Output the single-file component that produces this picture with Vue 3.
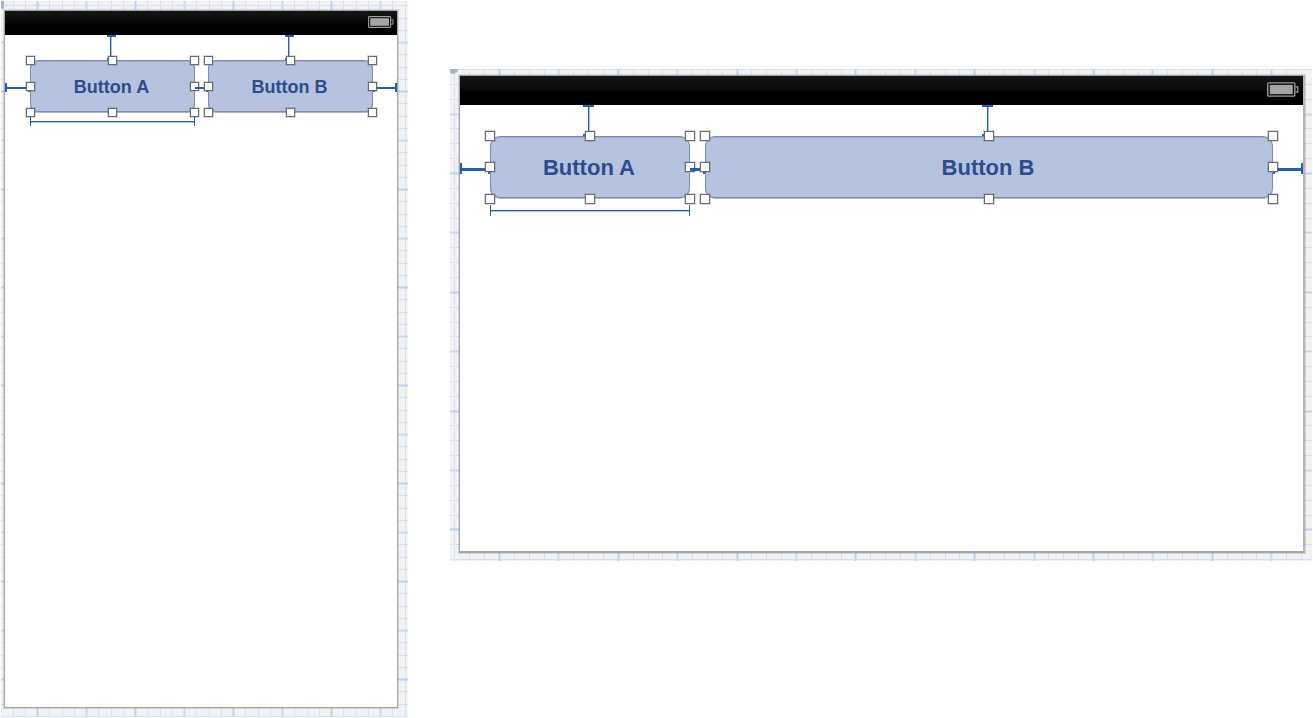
<script setup>
const boards = [
  { id: 'portrait', step: 49 / 4, originX: 36, originY: 90 },
  { id: 'landscape', step: 297 / 20, originX: 49, originY: 104 },
]
const buttons = [
  { id: 'a', label: 'Button A' },
  { id: 'b', label: 'Button B' },
]
const handles = ['nw', 'n', 'ne', 'w', 'e', 'sw', 's', 'se']

// Grid rules: thin ones, a heavier one every 4th and the heaviest every 8th.
function gridPath(board, weight) {
  let d = ''
  for (let i = -8; i < 72; i++) {
    const kind = i % 8 === 0 ? 'strong' : i % 4 === 0 ? 'medium' : 'thin'
    if (kind !== weight) continue
    const x = Math.round(board.originX + i * board.step)
    const y = Math.round(board.originY + i * board.step)
    d += `M${x + 0.5} 0V2000M0 ${y + 0.5}H3000`
  }
  return d
}
</script>

<template>
  <main class="page">
    <section v-for="board in boards" :key="board.id" class="canvas" :class="board.id" :aria-label="board.id">
      <svg class="grid" aria-hidden="true">
        <path class="thin" :d="gridPath(board, 'thin')" />
        <path class="medium" :d="gridPath(board, 'medium')" />
        <path class="strong" :d="gridPath(board, 'strong')" />
      </svg>
      <span class="corner"></span>
      <div class="screen">
        <header class="status">
          <svg class="battery" viewBox="0 0 26 12" aria-hidden="true">
            <rect x="0.6" y="0.6" width="22" height="10.8" rx="0.8" fill="#000" stroke="#a0a0a0" stroke-width="1.1" />
            <rect x="2.2" y="2.2" width="18.8" height="7.6" fill="#a5a5a5" />
            <path d="M23.2 3.8H25V8.2H23.2" fill="none" stroke="#a0a0a0" stroke-width="1" />
          </svg>
        </header>
        <div class="row">
          <div v-for="b in buttons" :key="b.id" class="item" :class="b.id">
            <button type="button">{{ b.label }}</button>
            <span class="pin top"></span>
            <span class="pin left"></span>
            <span v-if="b.id === 'b'" class="pin right"></span>
            <span v-if="b.id === 'a'" class="measure"></span>
            <span v-for="h in handles" :key="h" class="handle" :class="h"></span>
          </div>
        </div>
      </div>
    </section>
  </main>
</template>

<style>
body {
  margin: 0;
  background: #fff;
}
</style>

<style scoped>
.page {
  display: grid;
  grid-template-columns: 407fr 862fr;
  gap: 42px;
  align-items: start;
  padding: 1px 1px 0 1px;
  font-family: "Liberation Sans", Arial, Helvetica, sans-serif;
}
.canvas {
  position: relative;
  background: #f2f2f2;
}
.portrait {
  --inset: 25px;
  --end: 24px;
  --top: 25px;
  --gap: 13px;
  --fixed: 165px;
  --tall: 52px;
  --size: 18px;
  --radius: 8px;
  --handle: 9px;
  --half: 4px;
  --cap: 9px;
  --line: 2px;
  --drop: 5px;
  padding: 9px 10px 9px 3px;
}
.landscape {
  --inset: 30px;
  --end: 30px;
  --top: 31px;
  --gap: 15px;
  --fixed: 200px;
  --tall: 62px;
  --size: 22px;
  --radius: 10px;
  --handle: 10px;
  --half: 5px;
  --cap: 11px;
  --line: 3px;
  --drop: 7px;
  margin-top: 68px;
  padding: 6px 7px 8px 9px;
}
.grid {
  position: absolute;
  inset: 0;
  width: 100%;
  height: 100%;
}
.grid path {
  fill: none;
  stroke-width: 1px;
}
.grid .thin { stroke: #d3dff4; }
.grid .medium { stroke: #c6d9f4; stroke-width: 2px; }
.grid .strong { stroke: #bad1f1; stroke-width: 2px; }
.corner {
  position: absolute;
  top: 0;
  left: 0;
  width: 8px;
  height: 5px;
  background: #a9b3bf;
  border-radius: 0 0 5px 3px;
}
.portrait .corner {
  width: 3px;
  height: 8px;
}
.screen {
  position: relative;
  box-sizing: border-box;
  background: #fff;
  border: 1px solid #a4a5a5;
  box-shadow: 0 0 0 1px rgba(150, 150, 145, 0.3);
}
.portrait .screen {
  aspect-ratio: 394 / 698;
}
.landscape .screen {
  aspect-ratio: 846 / 478;
  border-right: 2px solid #b4b4b4;
  border-bottom-width: 2px;
}
.status {
  display: flex;
  justify-content: flex-end;
  align-items: flex-start;
  box-sizing: border-box;
  height: 24px;
  padding: 5px 3px 0 0;
  background: linear-gradient(#151515, #080808 50%, #000 55%);
}
.landscape .status {
  height: 29px;
  padding: 6px 4px 0 0;
}
.battery {
  width: 26px;
  height: 12px;
}
.landscape .battery {
  width: 32px;
  height: 15px;
}
.row {
  display: flex;
  gap: var(--gap);
  padding: var(--top) var(--end) 0 var(--inset);
}
.item {
  position: relative;
  flex: 1;
}
.item.a {
  flex: 0 0 var(--fixed);
}
button {
  display: block;
  width: 100%;
  height: var(--tall);
  margin: 0;
  padding: 2px 2px 0 0;
  border: 1px solid #7c8bb1;
  border-radius: var(--radius);
  background: #b5c3e0;
  box-shadow: 0 1px 0 #a9b5d2, inset 0 1px 0 #9faccc;
  color: #2f4b8b;
  font: bold var(--size) "Liberation Sans", Arial, Helvetica, sans-serif;
}
.pin,
.measure,
.handle {
  position: absolute;
  box-sizing: border-box;
}
.pin::before,
.pin::after {
  content: "";
  position: absolute;
  background: #1f61ae;
}
.pin.top {
  bottom: 100%;
  left: calc(50% - var(--half) - 2px);
  width: var(--cap);
  height: var(--top);
  border-top: 2px solid #1f61ae;
}
.pin.top::before {
  left: calc(50% - 1px);
  width: 1px;
  height: 100%;
  box-shadow: 1px 0 0 #a5c3e4;
}
.pin.top::after {
  left: 0;
  bottom: 0;
  width: 100%;
  height: 2px;
}
.pin.left,
.pin.right {
  top: calc(50% + 1px - var(--half));
  height: var(--cap);
}
.pin.left {
  right: 100%;
  width: var(--inset);
  border-left: 2px solid #1f61ae;
}
.pin.right {
  left: 100%;
  width: var(--end);
  border-right: 2px solid #1f61ae;
}
.b .pin.left {
  width: var(--gap);
  border-left: 0;
}
.pin.left::before,
.pin.right::before {
  left: 0;
  top: calc(50% - 1px);
  width: 100%;
  height: var(--line);
}
.pin.left::after,
.pin.right::after {
  top: 0;
  width: 2px;
  height: 100%;
}
.pin.left::after { right: 0; }
.pin.right::after { left: 0; }
.measure {
  top: calc(100% + var(--drop));
  left: 0;
  width: 100%;
  height: var(--cap);
  border: solid #1f61ae;
  border-width: 0 1px;
}
.measure::before {
  content: "";
  position: absolute;
  top: calc(50% - 1px);
  left: 0;
  width: 100%;
  height: 1px;
  background: #1f61ae;
  box-shadow: 0 1px 0 #a5c3e4;
}
.handle {
  width: var(--handle);
  height: var(--handle);
  background: #fff;
  border: 1px solid #6c6c6c;
  box-shadow: 0 0 0 1px rgba(110, 110, 110, 0.25);
}
.nw, .n, .ne { top: calc(0px - var(--half)); }
.w, .e { top: calc(50% - var(--half)); }
.sw, .s, .se { bottom: calc(0px - var(--half) - 1px); }
.nw, .w, .sw { left: calc(0px - var(--half)); }
.n, .s { left: calc(50% - 5px); }
.ne, .e, .se { right: calc(0px - var(--half)); }
</style>
